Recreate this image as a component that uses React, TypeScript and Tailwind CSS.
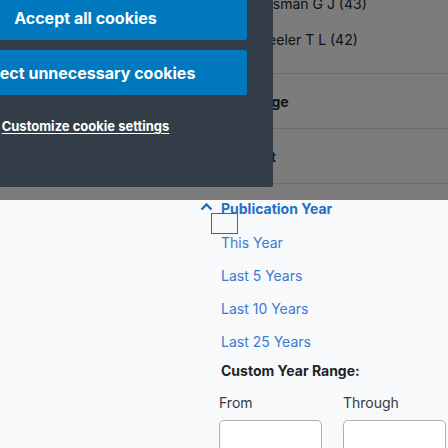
import React from "react";

export default function App() {
  const links = ["This Year", "Last 5 Years", "Last 10 Years", "Last 25 Years"];
  return (
    <div
      className="relative w-[448px] h-[448px] overflow-hidden bg-[#f8f9fa] text-[#212529]"
      style={{ fontFamily: "Inter, 'Noto Sans', sans-serif" }}
    >
      {/* page content */}
      <div className="pl-[200px] -mt-[15px]">
        <div className="pl-[46px] pb-4 border-b border-[#d6d8db] text-[14px]">
          <div className="h-9 flex items-center pl-[8px]">Hosman G J (43)</div>
          <div className="h-9 flex items-center">Wheeler T L (42)</div>
        </div>
        <div className="h-[54px] flex items-center pl-[21px] border-b border-[#d6d8db] text-[14px] font-bold box-content">
          Language
        </div>
        <div className="h-[54px] flex items-center pl-[21px] border-b border-[#d6d8db] text-[14px] font-bold box-content">
          Content
        </div>
        <div className="relative h-[42px] pt-[17px]">
          <div className="flex items-center leading-4 text-[14px] font-bold text-[#1f6fc5]">
            <svg width="13" height="9" viewBox="0 0 13 9" className="mr-[8px] -mt-[6px]">
              <polyline points="1.5,7.5 6.5,2.5 11.5,7.5" fill="none" stroke="#1f6fc5" strokeWidth="2.4" />
            </svg>
            <span>Publication Year</span>
          </div>
          <div className="absolute left-[11px] top-[29px] w-[27px] h-[21px] border border-[#ff1a1a]" />
        </div>
        <div className="pl-[21px]">
          {links.map((l) => (
            <div key={l} className="h-[33px] flex items-center text-[14px] text-[#3b7bd0]">
              {l}
            </div>
          ))}
          <div className="mt-[5px] leading-4 text-[14px] font-bold text-[#212529]">Custom Year Range:</div>
        </div>
        <div className="mt-4 pl-[19px] flex gap-[21px] text-[14px] text-[#343a40]">
          <div className="flex flex-col">
            <span className="leading-4">From</span>
            <div className="mt-[9px] w-[103px] h-[40px] rounded-[5px] border-[1.5px] border-[#aab1b9] bg-white" />
          </div>
          <div className="flex flex-col">
            <span className="leading-4">Through</span>
            <div className="mt-[9px] w-[103px] h-[40px] rounded-[5px] border-[1.5px] border-[#aab1b9] bg-white" />
          </div>
        </div>
      </div>

      {/* overlay */}
      <div className="absolute left-0 top-0 w-full h-[200px] bg-black/50" />

      {/* cookie banner */}
      <div className="absolute left-0 top-0 w-[273px] h-[187px] bg-[#343e48] rounded-br-[2px] overflow-hidden">
        <div className="-ml-[76px] -mt-[5px] w-[323px] flex flex-col items-stretch gap-[10px]">
          <button className="h-[45px] rounded-[3px] bg-[#0079be] text-white font-bold text-[16px] flex items-center justify-center whitespace-nowrap">
            Accept all cookies
          </button>
          <button className="h-[45px] rounded-[3px] bg-[#0079be] text-white font-bold text-[16px] flex items-center justify-center whitespace-nowrap">
            Reject unnecessary cookies
          </button>
          <div className="mt-[10px] text-center leading-5">
            <a className="text-white font-bold text-[13px] underline underline-offset-2">
              Customize cookie settings
            </a>
          </div>
        </div>
      </div>
    </div>
  );
}
